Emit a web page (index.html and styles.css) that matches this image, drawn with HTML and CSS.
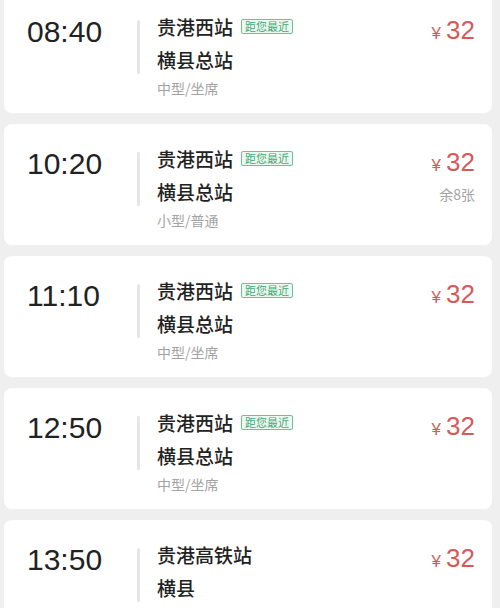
FILE: index.html
```html
<!DOCTYPE html>
<html lang="zh-CN">
<head>
    <meta charset="UTF-8">
    <meta name="viewport" content="width=device-width, initial-scale=1.0">
    <title>班次列表</title>
    <link rel="stylesheet" href="styles.css">
</head>
<body>
    <div class="trip-list">
        <div class="trip">
            <div class="time">08:40</div>
            <div class="divider"></div>
            <div class="route">
                <div class="station">贵港西站 <span class="tag">距您最近</span></div>
                <div class="station">横县总站</div>
                <div class="bus-type">中型/坐席</div>
            </div>
            <div class="price-box">
                <div class="price"><span class="yen">¥</span>32</div>
            </div>
        </div>
        <div class="trip">
            <div class="time">10:20</div>
            <div class="divider"></div>
            <div class="route">
                <div class="station">贵港西站 <span class="tag">距您最近</span></div>
                <div class="station">横县总站</div>
                <div class="bus-type">小型/普通</div>
            </div>
            <div class="price-box">
                <div class="price"><span class="yen">¥</span>32</div>
                <div class="left">余8张</div>
            </div>
        </div>
        <div class="trip">
            <div class="time">11:10</div>
            <div class="divider"></div>
            <div class="route">
                <div class="station">贵港西站 <span class="tag">距您最近</span></div>
                <div class="station">横县总站</div>
                <div class="bus-type">中型/坐席</div>
            </div>
            <div class="price-box">
                <div class="price"><span class="yen">¥</span>32</div>
            </div>
        </div>
        <div class="trip">
            <div class="time">12:50</div>
            <div class="divider"></div>
            <div class="route">
                <div class="station">贵港西站 <span class="tag">距您最近</span></div>
                <div class="station">横县总站</div>
                <div class="bus-type">中型/坐席</div>
            </div>
            <div class="price-box">
                <div class="price"><span class="yen">¥</span>32</div>
            </div>
        </div>
        <div class="trip">
            <div class="time">13:50</div>
            <div class="divider"></div>
            <div class="route">
                <div class="station">贵港高铁站</div>
                <div class="station">横县</div>
            </div>
            <div class="price-box">
                <div class="price"><span class="yen">¥</span>32</div>
            </div>
        </div>
    </div>
</body>
</html>
```

FILE: styles.css
```css
body {
    margin: 0;
    background: #efefef;
    font-family: "Liberation Sans", "Noto Sans CJK SC", sans-serif;
    color: #222;
    overflow: hidden;
}
.trip-list {
    display: flex;
    flex-direction: column;
    gap: 11px;
    margin-top: -8px;
    padding: 0 8px 0 4px;
}
.trip {
    display: flex;
    align-items: flex-start;
    height: 121px;
    box-sizing: border-box;
    padding: 18px 17px 0 23px;
    background: #fff;
    border-radius: 8px;
}
.time {
    width: 110px;
    margin-top: 5px;
    font-size: 30px;
    line-height: 34px;
    color: #222;
}
.divider {
    width: 3px;
    height: 54px;
    margin-top: 10px;
    background: #e6e6e6;
    border-radius: 2px;
}
.route {
    flex: 1;
    margin-left: 17px;
    font-family: "Noto Sans CJK SC", sans-serif;
}
.station {
    display: flex;
    align-items: center;
    font-size: 19px;
    font-weight: 500;
    line-height: 33px;
    color: #222;
}
.tag {
    margin-left: 8px;
    padding: 0 3px;
    font-size: 11px;
    font-weight: 400;
    line-height: 13px;
    color: #3fa873;
    background: #eef8f2;
    border: 1px solid #6cc196;
    border-radius: 2px;
}
.bus-type {
    margin-top: 2px;
    font-size: 14px;
    line-height: 20px;
    color: #a3a3a3;
}
.price-box {
    display: flex;
    flex-direction: column;
    align-items: flex-end;
}
.price {
    margin-top: 5px;
    font-size: 26px;
    line-height: 30px;
    color: #d55a5c;
}
.yen {
    margin-right: 5px;
    font-size: 17px;
}
.left {
    margin-top: 4px;
    font-family: "Noto Sans CJK SC", sans-serif;
    font-size: 14px;
    line-height: 18px;
    color: #a3a3a3;
}
```
